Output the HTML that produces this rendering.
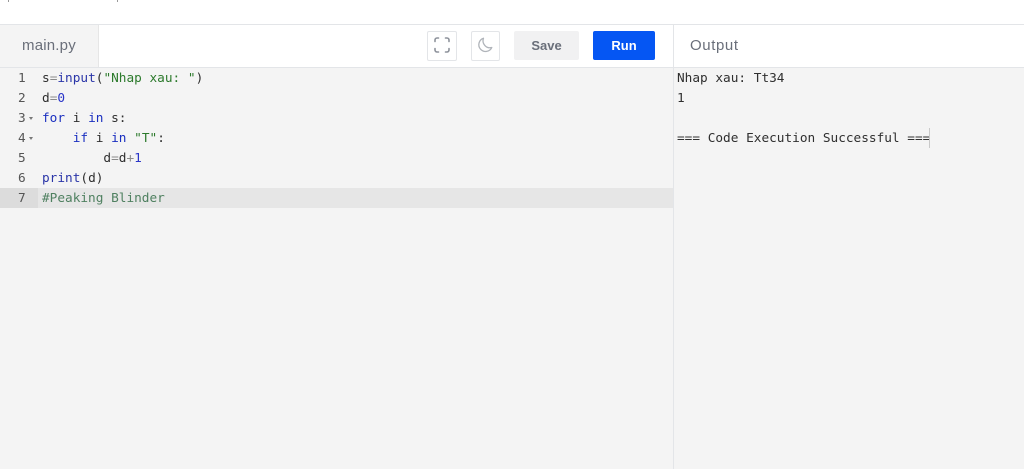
<!DOCTYPE html>
<html><head><meta charset="utf-8">
<style>
html,body{margin:0;padding:0;background:#fff;}
body{width:1024px;height:469px;position:relative;overflow:hidden;font-family:"Liberation Sans",sans-serif;}
.a{position:absolute;}
.m{font-family:"DejaVu Sans Mono",monospace;font-size:12.75px;line-height:20px;white-space:pre;color:#2f2f2f;}
.k{color:#1a2fc0}.s{color:#2c7a2c}.n{color:#2a35c8}.o{color:#8a8a8a}.c{color:#4f8060}.f{color:#2a35a8}
</style></head><body>
<div class="a" style="left:0;top:24px;width:1024px;height:1px;background:#e3e5e8"></div>
<div class="a" style="left:0;top:25px;width:98px;height:42px;background:#f4f4f4;border-right:1px solid #e6e6e6"></div>
<div class="a" style="left:0;top:67px;width:1024px;height:402px;background:#f4f4f4"></div>
<div class="a" style="left:0;top:67px;width:1024px;height:1px;background:#e3e5e8"></div>
<div class="a" style="left:673px;top:25px;width:1px;height:444px;background:#e3e5e8"></div>
<div class="a" style="left:22px;top:37px;font-size:15px;line-height:18px;color:#6a6f7a;letter-spacing:.2px">main.py</div>
<div class="a" style="left:690px;top:37px;font-size:15px;line-height:18px;color:#6a6f7a;letter-spacing:.6px">Output</div>

<div class="a" style="left:427px;top:31px;width:28px;height:28px;border:1px solid #e3e5e8;border-radius:2px"></div>
<svg class="a" style="left:434px;top:37px" width="16" height="16" viewBox="0 0 16 16" fill="none" stroke="#8d929b" stroke-width="1.6" stroke-linecap="round"><path d="M1 4.5V3a2 2 0 0 1 2-2h1.5M11.5 1H13a2 2 0 0 1 2 2v1.5M15 11.5V13a2 2 0 0 1-2 2h-1.5M4.5 15H3a2 2 0 0 1-2-2v-1.5"/></svg>
<div class="a" style="left:471px;top:31px;width:27px;height:28px;border:1px solid #e3e5e8;border-radius:2px"></div>
<svg class="a" style="left:477px;top:37px" width="16" height="16" viewBox="0 0 16 16" fill="none" stroke="#b0b4ba" stroke-width="1.3" stroke-linecap="round" stroke-linejoin="round"><path d="M6.5 1.2A6.8 6.8 0 1 0 14.8 10.5 7 7 0 0 1 6.5 1.2Z"/></svg>
<div class="a" style="left:514px;top:31px;width:65px;height:29px;background:#f1f1f2;border-radius:2px;text-align:center;font-size:13px;font-weight:bold;line-height:29px;color:#6a6f7a">Save</div>
<div class="a" style="left:593px;top:31px;width:62px;height:29px;background:#0556f3;border-radius:2px;text-align:center;font-size:13px;font-weight:bold;line-height:29px;color:#fff">Run</div>

<div class="a" style="left:0;top:188px;width:673px;height:20px;background:#e6e6e6"></div>
<div class="a" style="left:0;top:188px;width:38px;height:20px;background:#dcdcdc"></div>

<div class="a m" style="left:18px;top:69px;color:#555">1
2
3
4
5
6
7</div>
<div class="a" style="left:29px;top:117px;width:0;height:0;border-left:2.5px solid transparent;border-right:2.5px solid transparent;border-top:3px solid #777"></div>
<div class="a" style="left:29px;top:137px;width:0;height:0;border-left:2.5px solid transparent;border-right:2.5px solid transparent;border-top:3px solid #777"></div>
<div class="a m" style="left:42px;top:69px">s<span class="o">=</span><span class="f">input</span>(<span class="s">"Nhap xau: "</span>)
d<span class="o">=</span><span class="n">0</span>
<span class="k">for</span> i <span class="k">in</span> s:
    <span class="k">if</span> i <span class="k">in</span> <span class="s">"T"</span>:
        d<span class="o">=</span>d<span class="o">+</span><span class="n">1</span>
<span class="f">print</span>(d)
<span class="c">#Peaking Blinder</span></div>

<div class="a m" style="left:677px;top:69px">Nhap xau: Tt34
1

=== Code Execution Successful ===</div>
<div class="a" style="left:929px;top:128px;width:1px;height:20px;background:#c9c9c9"></div>
<div class="a" style="left:8px;top:0;width:1px;height:2px;background:#999"></div>
<div class="a" style="left:117px;top:0;width:1px;height:2px;background:#999"></div>
</body></html>
